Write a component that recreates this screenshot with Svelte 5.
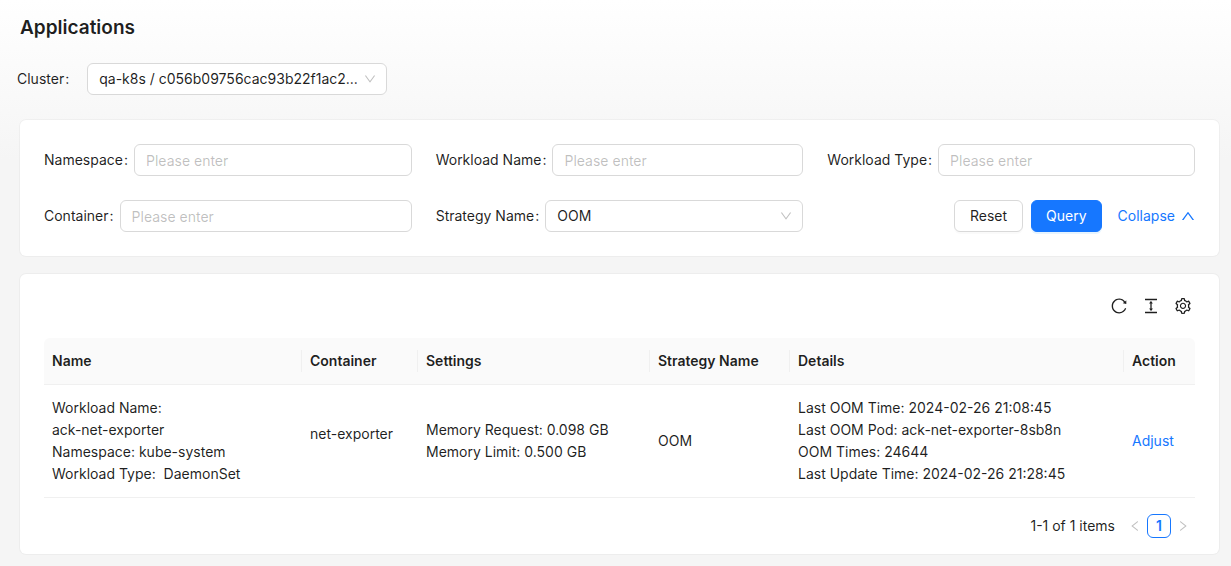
<script>
  const paths = {
    reload: 'M909.1 209.3l-56.4 44.1C775.8 155.1 656.2 92 521.9 92 290 92 102.3 279.5 102 511.5 101.7 743.7 289.8 932 521.9 932c181.3 0 335.8-115 394.6-276.1 1.5-4.2-.7-8.9-4.9-10.3l-56.7-19.5a8 8 0 00-10.1 4.8c-1.8 5-3.8 10-5.9 14.9-17.3 41-42.1 77.8-73.7 109.4A344.77 344.77 0 01655.9 829c-42.3 17.9-87.4 27-133.8 27-46.5 0-91.5-9.1-133.8-27A341.5 341.5 0 01279 755.2a342.16 342.16 0 01-73.7-109.4c-17.9-42.4-27-87.4-27-133.9s9.1-91.5 27-133.9c17.3-41 42.1-77.8 73.7-109.4 31.6-31.6 68.4-56.4 109.3-73.8 42.3-17.9 87.4-27 133.8-27 46.5 0 91.5 9.1 133.8 27a341.5 341.5 0 01109.3 73.8c9.9 9.9 19.2 20.4 27.8 31.4l-60.2 47a8 8 0 003 14.1l175.6 43c5 1.2 9.9-2.6 9.9-7.7l.8-180.9c-.1-6.6-7.8-10.3-13-6.2z',
    height: 'M840 836H184c-4.4 0-8 3.6-8 8v60c0 4.4 3.6 8 8 8h656c4.4 0 8-3.6 8-8v-60c0-4.4-3.6-8-8-8zm0-724H184c-4.4 0-8 3.6-8 8v60c0 4.4 3.6 8 8 8h656c4.4 0 8-3.6 8-8v-60c0-4.4-3.6-8-8-8zM610.8 378c6 0 9.4-7 5.7-11.7L515.7 238.7a7.14 7.14 0 00-11.3 0L403.6 366.3a7.23 7.23 0 005.7 11.7H476v268h-62.8c-6 0-9.4 7-5.7 11.7l100.8 127.5c2.9 3.7 8.5 3.7 11.3 0l100.8-127.5c3.7-4.7.4-11.7-5.7-11.7H548V378h62.8z',
    setting: 'M924.8 625.7l-65.5-56c3.1-19 4.7-38.4 4.7-57.8s-1.6-38.8-4.7-57.8l65.5-56a32.03 32.03 0 009.3-35.2l-.9-2.6a443.74 443.74 0 00-79.7-137.9l-1.8-2.1a32.12 32.12 0 00-35.1-9.5l-81.3 28.9c-30-24.6-63.5-44-99.7-57.6l-15.7-85a32.05 32.05 0 00-25.8-25.7l-2.7-.5c-52.1-9.4-106.9-9.4-159 0l-2.7.5a32.05 32.05 0 00-25.8 25.7l-15.8 85.4a351.86 351.86 0 00-99 57.4l-81.9-29.1a32 32 0 00-35.1 9.5l-1.8 2.1a446.02 446.02 0 00-79.7 137.9l-.9 2.6c-4.5 12.5-.8 26.5 9.3 35.2l66.3 56.6c-3.1 18.8-4.6 38-4.6 57.1 0 19.2 1.5 38.4 4.6 57.1L99 625.5a32.03 32.03 0 00-9.3 35.2l.9 2.6c18.1 50.4 44.9 96.9 79.7 137.9l1.8 2.1a32.12 32.12 0 0035.1 9.5l81.9-29.1c29.8 24.5 63.1 43.9 99 57.4l15.8 85.4a32.05 32.05 0 0025.8 25.7l2.7.5a449.4 449.4 0 00159 0l2.7-.5a32.05 32.05 0 0025.8-25.7l15.7-85a350 350 0 0099.7-57.6l81.3 28.9a32 32 0 0035.1-9.5l1.8-2.1c34.8-41.1 61.6-87.5 79.7-137.9l.9-2.6c4.5-12.3.8-26.3-9.3-35zM788.3 465.9c2.5 15.1 3.8 30.6 3.8 46.1s-1.3 31-3.8 46.1l-6.6 40.1 74.7 63.9a370.03 370.03 0 01-42.6 73.6L721 702.8l-31.4 25.8c-23.9 19.6-50.5 35-79.3 45.8l-38.1 14.3-17.9 97a377.5 377.5 0 01-85 0l-17.9-97.2-37.8-14.5c-28.5-10.8-55-26.2-78.7-45.7l-31.4-25.9-93.4 33.2c-17-22.9-31.2-47.6-42.6-73.6l75.5-64.5-6.5-40c-2.4-14.9-3.7-30.3-3.7-45.5 0-15.3 1.2-30.6 3.7-45.5l6.5-40-75.5-64.5c11.3-26.1 25.6-50.7 42.6-73.6l93.4 33.2 31.4-25.9c23.7-19.5 50.2-34.9 78.7-45.7l37.9-14.3 17.9-97.2c28.1-3.2 56.8-3.2 85 0l17.9 97 38.1 14.3c28.7 10.8 55.4 26.2 79.3 45.8l31.4 25.8 92.8-32.9c17 22.9 31.2 47.6 42.6 73.6L781.8 426l6.5 39.9zM512 326c-97.2 0-176 78.8-176 176s78.8 176 176 176 176-78.8 176-176-78.8-176-176-176zm79.2 255.2A111.6 111.6 0 01512 614c-29.9 0-58-11.7-79.2-32.8A111.6 111.6 0 01400 502c0-29.9 11.7-58 32.8-79.2C454 401.6 482.1 390 512 390c29.9 0 58 11.6 79.2 32.8A111.6 111.6 0 01624 502c0 29.9-11.7 58-32.8 79.2z',
    down: 'M884 256h-75c-5.1 0-9.9 2.5-12.9 6.6L512 654.2 227.9 262.6c-3-4.1-7.8-6.6-12.9-6.6h-75c-6.5 0-10.3 7.4-6.5 12.7l352.6 486.1c12.8 17.6 39 17.6 51.7 0l352.6-486.1c3.9-5.3.1-12.7-6.4-12.7z',
    left: 'M724 218.3V141c0-6.7-7.7-10.4-12.9-6.3L260.3 486.8a31.86 31.86 0 000 50.3l450.8 352.1c5.3 4.1 12.9.4 12.9-6.3v-77.3c0-4.9-2.3-9.6-6.1-12.6l-360-281 360-281.1c3.8-3 6.1-7.7 6.1-12.6z'
  };

  const rows = [
    {
      name: ['Workload Name:', 'ack-net-exporter', 'Namespace: kube-system', 'Workload Type:\u00a0 DaemonSet'],
      container: 'net-exporter',
      settings: ['Memory Request: 0.098 GB', 'Memory Limit: 0.500 GB'],
      strategy: 'OOM',
      details: [
        'Last OOM Time: 2024-02-26 21:08:45',
        'Last OOM Pod: ack-net-exporter-8sb8n',
        'OOM Times: 24644',
        'Last Update Time: 2024-02-26 21:28:45'
      ]
    }
  ];
  const columns = ['Name', 'Container', 'Settings', 'Strategy Name', 'Details', 'Action'];
</script>

{#snippet icon(name, cls = '')}
  <svg class="icon {cls}" viewBox="64 64 896 896" fill="currentColor" aria-hidden="true"><path d={paths[name]} /></svg>
{/snippet}

{#snippet textField(id, label)}
  <div class="field">
    <label for={id}>{label}<span class="colon">:</span></label>
    <input {id} type="text" placeholder="Please enter" />
  </div>
{/snippet}

{#snippet lines(items)}
  {#each items as item}<div>{item}</div>{/each}
{/snippet}

<main class="page">
  <h1>Applications</h1>

  <div class="cluster">
    <label for="cluster">Cluster<span class="colon">:</span></label>
    <div class="select">
      <select id="cluster"><option>qa-k8s / c056b09756cac93b22f1ac2...</option></select>
      {@render icon('down', 'arrow')}
    </div>
  </div>

  <form class="card filters" onsubmit={(e) => e.preventDefault()}>
    {@render textField('namespace', 'Namespace')}
    {@render textField('workload-name', 'Workload Name')}
    {@render textField('workload-type', 'Workload Type')}
    {@render textField('container', 'Container')}
    <div class="field">
      <label for="strategy">Strategy Name<span class="colon">:</span></label>
      <div class="select">
        <select id="strategy"><option>OOM</option></select>
        {@render icon('down', 'arrow')}
      </div>
    </div>
    <div class="actions">
      <button type="reset" class="btn">Reset</button>
      <button type="submit" class="btn primary">Query</button>
      <a href="#collapse" class="collapse">Collapse {@render icon('down', 'up')}</a>
    </div>
  </form>

  <section class="card results">
    <div class="toolbar">
      <button type="button" aria-label="Refresh">{@render icon('reload')}</button>
      <button type="button" aria-label="Density">{@render icon('height')}</button>
      <button type="button" aria-label="Column settings">{@render icon('setting')}</button>
    </div>

    <table>
      <colgroup>
        <col class="c-name" /><col class="c-container" /><col class="c-settings" />
        <col class="c-strategy" /><col /><col class="c-action" />
      </colgroup>
      <thead>
        <tr>{#each columns as column}<th scope="col"><div>{column}</div></th>{/each}</tr>
      </thead>
      <tbody>
        {#each rows as row}
          <tr>
            <td>{@render lines(row.name)}</td>
            <td><p>{row.container}</p></td>
            <td>{@render lines(row.settings)}</td>
            <td>{row.strategy}</td>
            <td>{@render lines(row.details)}</td>
            <td><a href="#adjust">Adjust</a></td>
          </tr>
        {/each}
      </tbody>
    </table>

    <nav class="pagination" aria-label="Pagination">
      <span class="total">1-1 of 1 items</span>
      <button type="button" class="step" disabled aria-label="Previous page">{@render icon('left')}</button>
      <button type="button" class="current" aria-current="page">1</button>
      <button type="button" class="step" disabled aria-label="Next page">{@render icon('left', 'flip')}</button>
    </nav>
  </section>
</main>

<style>
  :global(body) {
    background: #f5f5f5 linear-gradient(#ffffff, #f5f5f5 160px) no-repeat;
  }
  .page {
    box-sizing: border-box;
    padding: 12px 12px 12px 20px;
    font-family: Inter, "Liberation Sans", sans-serif;
    font-size: 14px;
    line-height: 22px;
    color: rgba(0, 0, 0, 0.88);
  }
  h1 {
    margin: 0 0 20px;
    font-size: 19px;
    line-height: 31px;
    font-weight: 600;
  }
  a { color: #1677ff; text-decoration: none; }
  button, input, select { font: inherit; color: inherit; }
  button { cursor: pointer; }
  .icon { display: block; width: 12px; height: 12px; flex: none; }
  .icon.up { width: 14px; height: 14px; transform: rotate(180deg); }
  .flip { transform: scaleX(-1); }

  label { white-space: nowrap; }
  .colon { margin: 0 6px 0 1px; }
  .cluster {
    display: flex;
    align-items: center;
    gap: 12px;
    margin: 0 0 25px -3px;
  }
  .cluster .select { flex: 0 1 300px; }
  .field { display: flex; align-items: center; min-width: 0; }
  .field input, .field .select { flex: 1; min-width: 0; }
  input, select {
    box-sizing: border-box;
    height: 32px;
    padding: 0 11px;
    border: 1px solid #d9d9d9;
    border-radius: 6px;
    background: #fff;
    outline: none;
  }
  input::placeholder { color: rgba(0, 0, 0, 0.25); opacity: 1; }
  .select { display: grid; align-items: center; }
  .select > * { grid-area: 1 / 1; }
  select {
    width: 100%;
    padding-right: 24px;
    appearance: none;
    text-overflow: ellipsis;
  }
  .select :global(.arrow) {
    justify-self: end;
    margin-right: 11px;
    color: rgba(0, 0, 0, 0.25);
    pointer-events: none;
  }

  .card {
    background: #fff;
    border-radius: 6px;
    box-shadow: 0 0 0 1px rgba(0, 0, 0, 0.03);
  }
  .filters {
    display: grid;
    grid-template-columns: repeat(3, minmax(0, 1fr));
    gap: 24px;
    padding: 24px;
    margin-bottom: 18px;
  }
  .actions { display: flex; justify-content: flex-end; align-items: center; gap: 8px; }
  .btn {
    box-sizing: border-box;
    height: 32px;
    padding: 0 15px;
    border: 1px solid #d9d9d9;
    border-radius: 6px;
    background: #fff;
    box-shadow: 0 2px 0 rgba(0, 0, 0, 0.02);
  }
  .primary {
    padding: 0 14px;
    border-color: #1677ff;
    background: #1677ff;
    color: #fff;
    box-shadow: 0 2px 0 rgba(5, 145, 255, 0.1);
  }
  .collapse { display: flex; align-items: center; gap: 6px; margin-left: 8px; }

  .results { padding: 0 24px 16px; }
  .toolbar {
    display: flex;
    justify-content: flex-end;
    align-items: center;
    gap: 16px;
    height: 64px;
    padding-right: 4px;
  }
  .toolbar button, .step {
    padding: 0;
    border: 0;
    background: none;
  }
  .toolbar .icon { width: 16px; height: 16px; }

  table {
    width: 100%;
    table-layout: fixed;
    border-collapse: separate;
    border-spacing: 0;
  }
  .c-name { width: 258px; }
  .c-container { width: 116px; }
  .c-settings { width: 232px; }
  .c-strategy { width: 140px; }
  .c-action { width: 71px; }
  th, td {
    padding: 12px 8px;
    border-bottom: 1px solid #f0f0f0;
    text-align: left;
    white-space: nowrap;
  }
  th {
    padding-right: 0;
    background: #fafafa;
    font-weight: 600;
  }
  th div { border-right: 1px solid #f0f0f0; }
  th:first-child { border-top-left-radius: 6px; }
  th:last-child { border-top-right-radius: 6px; }
  th:last-child div { border: 0; }
  td p { margin: 0 0 14px; }

  .pagination {
    display: flex;
    justify-content: flex-end;
    align-items: center;
    margin-top: 16px;
  }
  .total { margin-right: 8px; }
  .step {
    display: grid;
    place-items: center;
    width: 24px;
    height: 24px;
    color: rgba(0, 0, 0, 0.25);
  }
  .current {
    box-sizing: border-box;
    width: 24px;
    height: 24px;
    padding: 0;
    border: 1px solid #1677ff;
    border-radius: 6px;
    background: #fff;
    color: #1677ff;
    font-weight: 600;
  }
</style>
